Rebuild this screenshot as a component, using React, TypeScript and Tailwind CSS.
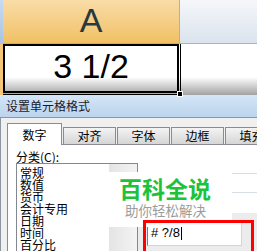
import React from 'react';

const App: React.FC = () => {
  const tabs = ['对齐', '字体', '边框', '填充'];
  const items = ['常规', '数值', '货币', '会计专用', '日期', '时间', '百分比'];

  return (
    <div className="relative w-[257px] h-[251px] overflow-hidden bg-white font-['Noto_Sans_CJK_SC',sans-serif]">
      {/* column header */}
      <div className="flex h-[44px]">
        <div className="w-[3px] bg-gradient-to-b from-[#c8daf0] to-[#a9c3e5]" />
        <div className="w-[177px] flex items-center justify-center pb-[2px] border-r border-b border-[#f2a344] bg-gradient-to-b from-[#f9dca6] to-[#f1c063] text-[34px] text-[#26393e] font-['Liberation_Sans',sans-serif]">
          A
        </div>
        <div className="flex-1 border-b border-[#9db5cf] bg-gradient-to-b from-[#f5f7fa] to-[#dbe3ed]" />
      </div>

      {/* row 1 */}
      <div className="flex h-[51px] bg-gradient-to-b from-white from-65% to-[#a2a2a2]">
        <div className="w-[3px] bg-[#f5c57a]" />
        <div className="relative w-[178px] pr-px pb-px border-r border-b border-black">
          <div className="h-full flex items-center justify-center pb-[4px] border-2 border-black text-[34px] text-black font-['Liberation_Sans',sans-serif]">
            3 1/2
          </div>
          <div className="absolute right-[-3px] bottom-[-3px] w-[6px] h-[6px] bg-black border border-white" />
        </div>
      </div>

      {/* format cells dialog */}
      <div className="flex flex-col h-[156px]">
        <div className="h-[30px] flex items-center pl-[6px] bg-gradient-to-b from-[#d4e5f7] to-[#bcd4ed] text-[12px] text-[#1a1a2a]">
          设置单元格格式
        </div>
        <div className="flex flex-1">
          <div className="w-[5px] bg-[#b9d1ea]" />
          <div className="flex-1 flex flex-col border-l border-t border-[#8b96a2] bg-[#f0f0f0] pl-[6px] pt-[5px]">
            <div className="flex items-end h-[21px] text-[12px] leading-none text-black">
              <div className="relative z-10 -mb-px w-[55px] h-[22px] flex items-center justify-center bg-white border border-b-0 border-[#898c95]">
                数字
              </div>
              {tabs.map((t) => (
                <div
                  key={t}
                  className="ml-px shrink-0 w-[53px] h-[17px] flex items-center justify-center border border-b-0 border-[#898c95] bg-gradient-to-b from-[#f4f4f4] to-[#d5d5d5]"
                >
                  {t}
                </div>
              ))}
            </div>

            <div className="flex-1 flex bg-white border-l border-t border-[#898c95] pl-[8px] pt-[5px]">
              <div className="w-[122px] flex flex-col">
                <div className="h-[13px] text-[12px] leading-[13px] text-black">分类(C):</div>
                <div className="flex-1 flex border-l border-t border-r border-[#828790]">
                  <div className="flex-1 pl-[3px] pt-[3px] text-[12px] leading-[12px] text-black">
                    {items.map((it) => (
                      <div key={it} className="h-[12px]">{it}</div>
                    ))}
                  </div>
                  <div className="w-[28px] bg-gradient-to-r from-[#e4e4e4] to-[#f3f3f3]" />
                </div>
              </div>

              <div className="flex-1 flex flex-col">
                <div className="mt-[23px] h-px bg-[#d5dfe5]" />
                <div className="mt-[18px] h-px bg-[#d5dfe5]" />
                <div className="mt-[20px] flex-1 bg-[#ececec] pt-[7px] pl-[9px]">
                  <div className="w-[95px] h-[26px] flex items-center pl-[3px] bg-white border border-[#7a7a7a] border-r-[#d4d4d4] border-b-[#d4d4d4] text-[13px] text-black font-['Liberation_Sans',sans-serif]">
                    # ?/8
                    <span className="ml-px w-px h-[14px] bg-black" />
                  </div>
                </div>
              </div>
            </div>
          </div>
        </div>
      </div>

      {/* watermark */}
      <div className="absolute left-[104px] top-[172px] w-[128px] h-[55px] bg-white pl-[15px] pt-[3px]">
        <div className="text-[23px] leading-[26px] font-bold text-[#1dc23b]">百科全说</div>
        <div className="ml-[6px] mt-[1px] text-[13.5px] leading-[16px] text-[#9c9c9c]">助你轻松解决</div>
      </div>

      {/* red highlight */}
      <div className="absolute left-[143px] top-[220px] w-[111px] h-[40px] border-[3px] border-[#f00]" />
    </div>
  );
};

export default App;
